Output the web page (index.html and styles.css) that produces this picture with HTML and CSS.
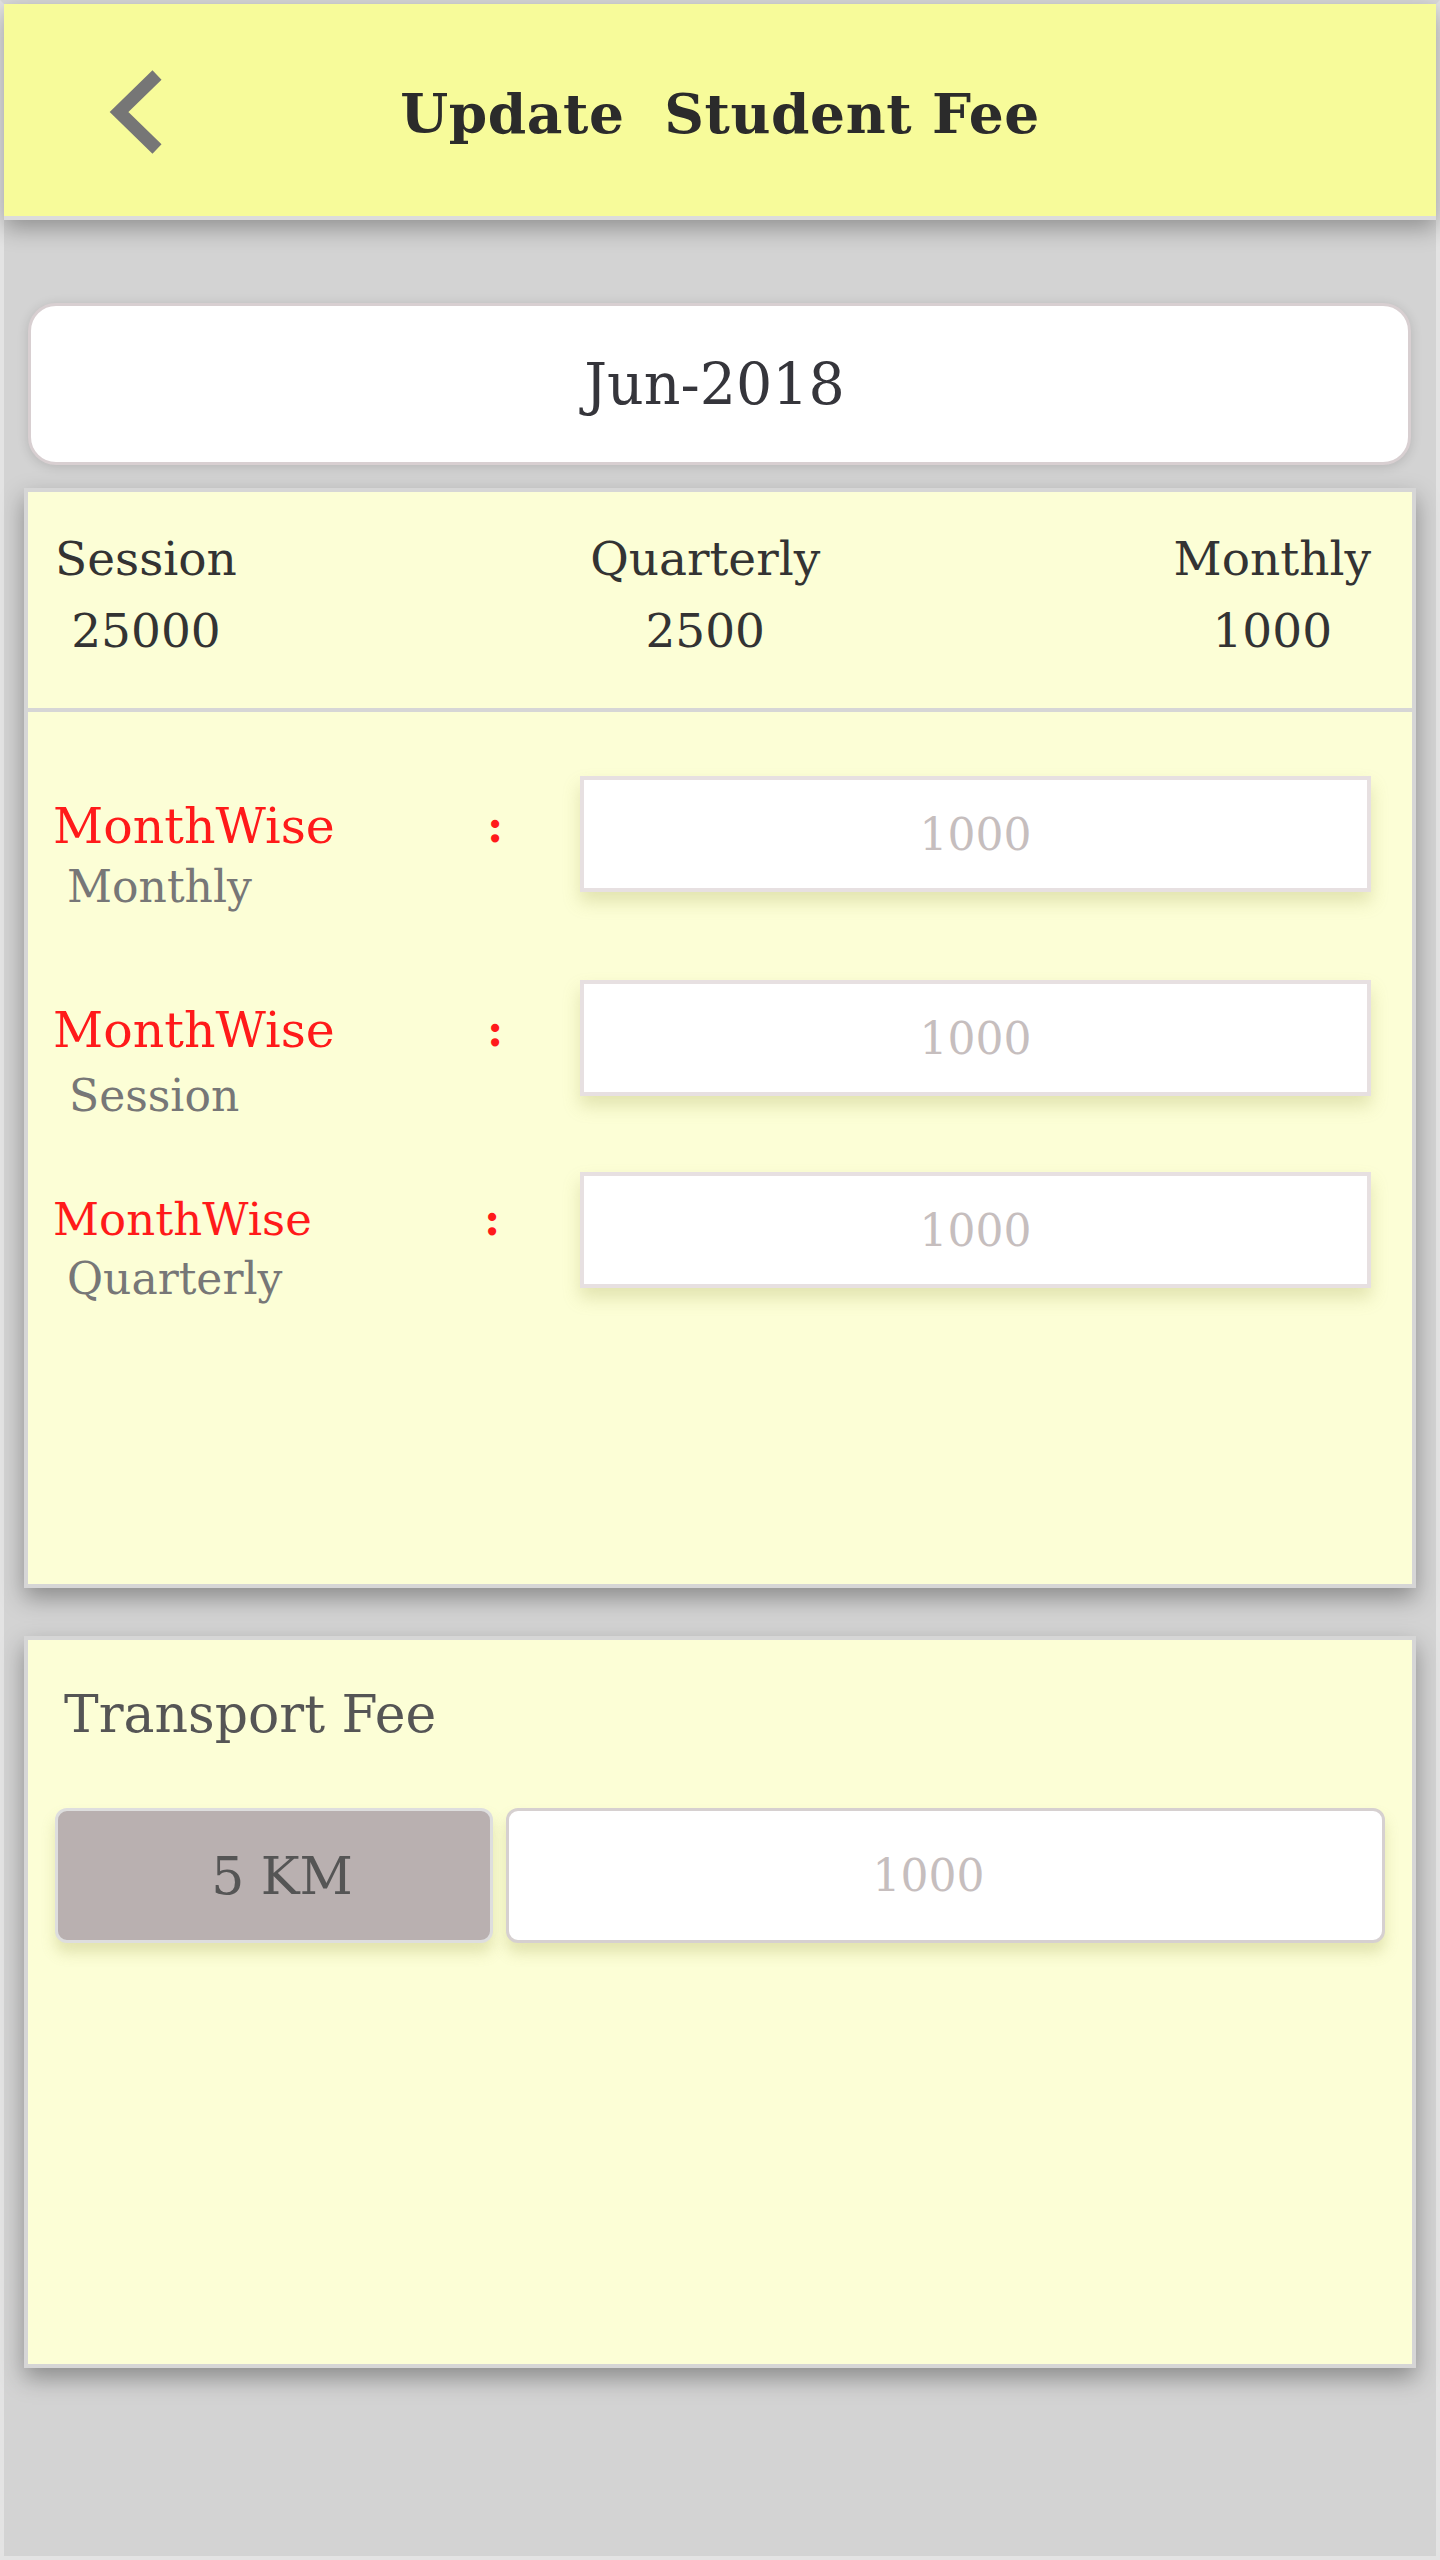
FILE: index.html
```html
<!DOCTYPE html>
<html lang="en">
<head>
<meta charset="utf-8">
<title>Update Student Fee</title>
<link rel="stylesheet" href="styles.css">
</head>
<body>
<div class="app">
  <header class="topbar">
    <div class="topbar-left">
      <svg class="back" width="70" height="100" viewBox="0 0 70 100" aria-label="Back">
        <polyline points="57,15 19,52 57,89" fill="none" stroke="#767676" stroke-width="13" stroke-linejoin="miter" stroke-linecap="butt"/>
      </svg>
    </div>
    <h1 class="title">Update&nbsp; Student Fee</h1>
    <div class="topbar-right"></div>
  </header>

  <main class="content">
    <div class="month-card">Jun-2018</div>

    <section class="panel fee-panel">
      <div class="summary">
        <div class="sum-col"><div>Session</div><div>25000</div></div>
        <div class="sum-col"><div>Quarterly</div><div>2500</div></div>
        <div class="sum-col"><div>Monthly</div><div>1000</div></div>
      </div>

      <div class="rows">
        <div class="fee-row row-1">
          <div class="label">
            <div class="label-main">MonthWise</div>
            <div class="label-sub">Monthly</div>
          </div>
          <div class="colon">:</div>
          <input class="fee-input" type="text" placeholder="1000">
        </div>
        <div class="fee-row row-2">
          <div class="label">
            <div class="label-main">MonthWise</div>
            <div class="label-sub">Session</div>
          </div>
          <div class="colon">:</div>
          <input class="fee-input" type="text" placeholder="1000">
        </div>
        <div class="fee-row row-3">
          <div class="label">
            <div class="label-main">MonthWise</div>
            <div class="label-sub">Quarterly</div>
          </div>
          <div class="colon">:</div>
          <input class="fee-input" type="text" placeholder="1000">
        </div>
      </div>
    </section>

    <section class="panel transport-panel">
      <h2 class="transport-title">Transport Fee</h2>
      <div class="transport-row">
        <div class="km">5 KM</div>
        <input class="t-input" type="text" placeholder="1000">
      </div>
    </section>
  </main>
</div>
</body>
</html>
```

FILE: styles.css
```css
* { box-sizing: border-box; }

html, body {
  margin: 0;
  padding: 0;
}

body {
  background: #d3d3d3;
  font-family: "DejaVu Serif", "Liberation Serif", serif;
  color: #333;
}

.app {
  min-height: 2560px;
  background: #d3d3d3;
  border: 4px solid #e3e3e3;
  border-top-color: #d9d9d9;
}

/* Header */
.topbar {
  position: relative;
  z-index: 2;
  height: 216px;
  background: #f7fb9a;
  border-bottom: 4px solid #dcdcdc;
  box-shadow: 0 8px 22px rgba(0, 0, 0, 0.32);
  display: grid;
  grid-template-columns: 1fr auto 1fr;
  align-items: center;
}

.topbar-left {
  padding-left: 96px;
  display: flex;
  align-items: center;
}

.back { display: block; }

.title {
  margin: 0;
  padding-top: 7px;
  font-family: "DejaVu Serif", serif;
  font-weight: bold;
  font-size: 55px;
  line-height: 55px;
  letter-spacing: 0.6px;
  color: #2b2b2b;
  white-space: nowrap;
}

/* Content */
.content {
  padding: 83px 20px 0;
}

.month-card {
  height: 162px;
  margin: 0 5px 0 4px;
  background: #fff;
  border: 3px solid #d8cfd1;
  border-radius: 28px;
  box-shadow: 0 2px 12px rgba(0, 0, 0, 0.14);
  display: flex;
  align-items: center;
  justify-content: center;
  padding-right: 10px;
  font-size: 57px;
  color: #35353b;
}

.panel {
  background: #fcfed6;
  border: 4px solid #d6d6d6;
  box-shadow: 0 10px 22px rgba(0, 0, 0, 0.34);
}

.fee-panel {
  margin-top: 23px;
  height: 1100px;
}

.summary {
  display: flex;
  justify-content: space-between;
  padding: 31px 41px 41px 27px;
  border-bottom: 4px solid #d6d6d6;
  font-size: 47px;
  line-height: 72px;
  color: #333;
}

.sum-col {
  text-align: center;
}

.rows {
  padding: 64px 41px 0 25px;
}

.fee-row {
  display: grid;
  grid-template-columns: 434px 93px 1fr;
  align-items: start;
  height: 116px;
}

.row-2 { margin-top: 88px; }
.row-3 { margin-top: 76px; }

.label-main {
  padding-top: 21px;
  font-size: 49px;
  line-height: 60px;
  color: #ff1a1a;
}

.label-sub {
  margin-top: 2px;
  padding-left: 14px;
  font-size: 44px;
  line-height: 56px;
  color: #777;
}

.row-2 .label-sub { margin-top: 7px; padding-left: 16px; }

.row-3 .label-main {
  padding-top: 18px;
  font-size: 45px;
}
.row-3 .label-sub { margin-top: 1px; }

.colon {
  padding-top: 21px;
  font-size: 44px;
  line-height: 60px;
  font-weight: bold;
  color: #ff1a1a;
}
.row-3 .colon { padding-top: 18px; margin-left: -3px; }

.fee-input {
  display: block;
  width: 100%;
  height: 116px;
  margin: 0;
  padding: 0;
  background: #fff;
  border: 4px solid #e7e0e1;
  border-radius: 0;
  box-shadow: 0 10px 16px rgba(160, 160, 80, 0.28);
  font-family: "DejaVu Serif", serif;
  font-size: 44px;
  text-align: center;
  color: #333;
  outline: none;
}

.fee-input::placeholder,
.t-input::placeholder {
  color: #c6bebe;
  opacity: 1;
}

/* Transport */
.transport-panel {
  margin-top: 48px;
  height: 732px;
  padding: 0 27px;
}

.transport-title {
  margin: 43px 0 0 9px;
  font-weight: normal;
  font-size: 52px;
  line-height: 62px;
  color: #555;
}

.transport-row {
  display: flex;
  gap: 13px;
  margin-top: 63px;
  height: 135px;
}

.km {
  width: 438px;
  flex: none;
  background: #b9b0b0;
  border: 3px solid #dedede;
  border-radius: 12px;
  box-shadow: 0 10px 14px rgba(170, 170, 90, 0.3);
  display: flex;
  align-items: center;
  justify-content: center;
  padding-left: 16px;
  font-size: 52px;
  color: #555;
}

.t-input {
  flex: 1;
  min-width: 0;
  height: 135px;
  margin: 0;
  padding: 0 34px 0 0;
  background: #fff;
  border: 3px solid #d6d0d0;
  border-radius: 12px;
  box-shadow: 0 10px 14px rgba(170, 170, 90, 0.3);
  font-family: "DejaVu Serif", serif;
  font-size: 44px;
  text-align: center;
  color: #333;
  outline: none;
}
```
